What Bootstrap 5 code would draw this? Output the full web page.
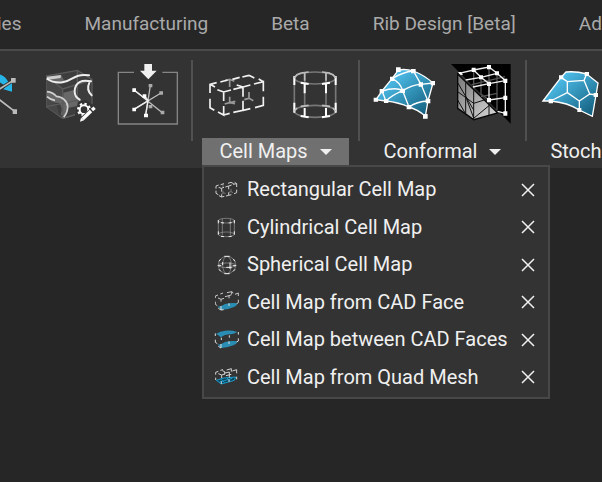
<!DOCTYPE html>
<html lang="en" data-bs-theme="dark">
<head>
<meta charset="utf-8">
<meta name="viewport" content="width=device-width, initial-scale=1">
<title>Cell Maps</title>
<link href="https://cdn.jsdelivr.net/npm/bootstrap@5.3.0/dist/css/bootstrap.min.css" rel="stylesheet">
<style>
  body { background: #262626; color: #f0f0f0; font-family: Roboto, sans-serif; font-size: 20px; line-height: 27px; min-height: 100vh; overflow: hidden; }
  .tabs { gap: 63px; height: 49px; margin-left: -3px; padding-bottom: 2px; font-size: 19px; white-space: nowrap; overflow: hidden; }
  .tabs .nav-link { color: #aaa; padding: 0; }
  .ribbon { background: #333; border-top: 2px solid #4a4a4a; padding-bottom: 3px; }
  .tool-group { width: 165px; padding-top: 13px; }
  .tool-group .tools { gap: 18px; margin-bottom: 14px; }
  .edit-group { width: 191px; padding-right: 13px; overflow: hidden; }
  .more-groups { min-width: 0; }
  .tool { width: 60px; height: 60px; }
  .tool svg { width: 60px; height: 60px; overflow: visible; display: block; }
  .rule { width: 2px; height: 81px; margin-top: 9px; background: #505050; }
  .group-btn { color: #f0f0f0; font-size: 20px; line-height: 27px; padding: 0 17px; gap: 12px; white-space: nowrap; }
  .group-btn.active { background: #707070 !important; color: #f0f0f0 !important; }
  .group-btn svg { width: 12px; height: 6px; }
  .map-menu.dropdown-menu { background: #333; border: 2px solid #484848; top: 100%; left: 9px; width: 348px; height: 234px; padding: 4px 0 1px; }
  .map-menu li { padding: 0 12px 0 11px; }
  .map-menu .pick { color: #f0f0f0; gap: 8px; font-size: 20px; line-height: 27px; white-space: nowrap; }
  .map-menu .pick svg { width: 24px; height: 24px; overflow: visible; }
  .close-x { width: 16px; height: 16px; }
  .close-x svg { width: 16px; height: 16px; display: block; }
</style>
<script src="https://cdn.jsdelivr.net/npm/bootstrap@5.3.0/dist/js/bootstrap.bundle.min.js"></script>
</head>
<body>
<svg class="position-absolute" width="0" height="0" aria-hidden="true">
  <defs>
    <linearGradient id="blue" x1="0" y1="0" x2="1" y2="1"><stop offset=".2" stop-color="#4fc0ec"/><stop offset="1" stop-color="#0d5573"/></linearGradient>
    <linearGradient id="silver" x1="0" y1="0" x2="1" y2="1"><stop offset="0" stop-color="#777"/><stop offset="1" stop-color="#ddd"/></linearGradient>
    <symbol id="box" viewBox="51 42 180 180">
      <g fill="none" stroke-width="5">
        <path stroke="#999" d="M119 88v23M119 140v18l-15 4M119 158l16 3M119 158l17-4M177 126v19l-14 4M177 145l13 7M106 92l13-4 14 6"/>
        <path stroke="#f2f2f2" d="M60 129v-26l20-5M60 103l15 8M60 146v27l13 8M82 119l19 7 22-6M101 126v27M101 168v27l-17-9M101 195l18-5M130 118l29-7 22-6M159 111v29M159 152v29l-29 6M159 181l22-5M140 105l19 6M192 102l28-7v29M220 95l-14-8M220 140v26l-25 7M177 76l16 8M157 81l20-5M127 88l22-6M91 96l22-6"/>
      </g>
    </symbol>
    <symbol id="cyl" viewBox="285 42 180 180">
      <g fill="none">
        <g stroke="#777" stroke-width="5"><ellipse cx="375" cy="84" rx="62" ry="18"/><ellipse cx="375" cy="184" rx="62" ry="18"/><path d="M313 84v100M437 84v100M344 70v97M408 70v97"/></g>
        <g stroke="#fff" stroke-width="6"><path d="M313 78v27M313 158v30M437 78v27M437 158v30M344 102v28M344 174v28M408 102v28M408 174v28M332 98l24 4M396 102l24-4M332 198l24 4M396 202l24-4"/></g>
        <path stroke="#bbb" stroke-width="5" d="M344 68v24M408 68v24M313 84l8-10 12-5M437 84l-8-10-12-5M313 184l8-10M437 184l-8-10M332 69l24-3M396 66l24 3M332 169l24-3M396 166l24 3"/>
      </g>
    </symbol>
    <symbol id="box-small" viewBox="45 54 72 72">
      <path fill="none" stroke="#777" stroke-width="3" d="M69 73v8M69 92v7l-5 3M69 99l8 1M93 87v8l-7 2M93 95l6 3"/>
      <path fill="none" stroke="#cfcfcf" stroke-width="3" d="M48 86v-8l8-3M48 92v8l7 4M56 82l8 3 8-3M65 85v10M65 103v8l-8-4M65 111l8-2M76 81l10-3 9-3M86 78v10M86 97v9l-8 2M86 106l8-2M99 73l11-2v10M110 71l-6-4M110 89v9l-8 3M84 70l9-3 8 4M62 74l10-3"/>
    </symbol>
    <symbol id="cyl-small" viewBox="45 162 72 72">
      <g fill="none" stroke="#999" stroke-width="2"><ellipse cx="79" cy="179" rx="24" ry="7"/><ellipse cx="79" cy="220" rx="24" ry="7"/><path d="M55 179v41M103 179v41M67 173v50M91 173v50"/></g>
      <path fill="none" stroke="#f0f0f0" stroke-width="3" d="M55 177v10M103 177v10M55 211v10M103 211v10M63 185l9 1M86 186l9-1M63 226l9 1M86 227l9-1"/>
    </symbol>
    <symbol id="cross" viewBox="0 0 16 16"><path d="M2 2 14 14M14 2 2 14" fill="none" stroke="#f0f0f0" stroke-width="1.5"/></symbol>
    <symbol id="caret" viewBox="0 0 12 6"><path d="M0 0h12L6 6z" fill="#f0f0f0"/></symbol>
    <symbol id="crown" viewBox="45 30 72 72">
      <path fill="none" stroke="#c9c9c9" stroke-width="3" d="M46 54v-6l8-3M46 65v8l6 4M54 54l9 4 9-3M63 58v7M61 42l8-3M75 50l12-3 8-3M87 47v8M81 38l14-3v7M95 35l5 4M105 43l10-4v9M115 59v9l-5 3"/>
    </symbol>
  </defs>
</svg>

<nav class="nav tabs flex-nowrap align-items-center" aria-label="Ribbon tabs">
  <a class="nav-link" href="#">ies</a>
  <a class="nav-link" href="#">Manufacturing</a>
  <a class="nav-link" href="#">Beta</a>
  <a class="nav-link" href="#">Rib Design [Beta]</a>
  <a class="nav-link" href="#">Ad</a>
</nav>

<main class="ribbon d-flex">
  <section class="tool-group edit-group flex-shrink-0 d-flex flex-column align-items-end">
    <div class="tools d-flex">
      <button class="tool btn p-0 border-0 flex-shrink-0" aria-label="Rotate lattice">
        <svg viewBox="-114 192 180 180"><path fill="#27b5e8" d="M-20 222Q12 218 27 250l9-3v28l-26-7 6-7Q2 240-20 248z"/><path d="M-20 279 40 241M-20 285 45 335" stroke="#333" stroke-width="10"/><path d="M-20 279 40 241M-20 285 45 335" stroke="#bbb" stroke-width="5"/><path fill="#bbb" d="M33 234h14v14H33zM38 328h13v14H38z"/></svg>
      </button>
      <button class="tool btn p-0 border-0 flex-shrink-0" aria-label="Edit implicit body">
        <svg viewBox="120 192 180 180">
          <path fill="#3d3d3d" stroke="#595959" stroke-width="4" d="m140 228 92-17 44 27v92l-88 25-48-34z"/>
          <path fill="#666" d="m140 231 44-6q5 13 12 20l-20 3q-15-2-36-12zM140 276q22 0 30 13 20-6 33 10 8 28-9 50l-12-5q8-25-6-35-22 0-36-18z"/>
          <path fill="#686868" d="m190 278 32-8q2 22 19 30l-8 18-31 6q4-20-12-30z"/>
          <path fill="#484848" d="m140 236 48 31v28l-48-20zM140 292l30 24 8 30-38-26z"/>
          <path fill="none" stroke="#5b5b5b" stroke-width="4" d="m140 228 48 39 88-27M188 267v88M232 211v90l44 29M140 320l92-19M188 355l88-25"/>
          <path fill="#ccc" d="m141 230 42-5-1 9-41 6z"/>
          <g fill="none" stroke="#eee" stroke-width="6" stroke-linecap="round"><path d="M142 237q18 13 46 10c28-3 34-28 79-21M273 244c-27-5-48 1-49 30q0 17 15 25M268 248q-10 22 7 38"/></g>
          <path fill="none" stroke="#d0d0d0" stroke-width="5" d="M141 275q18 2 28 14c18 0 34 16 34 31q0 17-12 32M141 290q9 9 24 11"/>
          <path fill="#333" d="m234 305 24-5 18 13 17 2v28l-46 27-23-20z"/>
          <circle cx="252" cy="329" r="13" fill="none" stroke="#fff" stroke-width="6"/><circle cx="252" cy="329" r="18" fill="none" stroke="#fff" stroke-width="6" stroke-dasharray="7 7"/>
          <path stroke="#333" stroke-width="18" d="m244 363 40-38"/><path stroke="#fff" stroke-width="10" d="m248 357 25-24M276 330l8-7"/><path fill="#fff" d="m240 365 3-12 9 8z"/>
        </svg>
      </button>
      <button class="tool btn p-0 border-0 flex-shrink-0" aria-label="Import lattice">
        <svg viewBox="354 192 180 180"><path fill="none" stroke="#858585" stroke-width="4" d="M402 217h-47v155h177V217h-45"/><path fill="#f0f0f0" d="M433 192h23v20h14l-25 26-25-26h13z"/><g stroke-width="4" stroke="#bbb" fill="none"><path d="m402 270 85 68M402 328l81-49M437 346l14-89"/><path stroke="#eee" d="m402 328 43-26-12-14M402 270l42 32-7 42"/></g><path fill="#aaa" d="M446 252h11v10h-11zM478 274h11v10h-11zM482 332h11v11h-11zM446 315h11v10h-11z"/><path fill="#fff" d="M397 265h11v11h-11zM397 323h11v11h-11zM428 283h11v11h-11zM432 341h12v11h-12z"/></svg>
      </button>
    </div>
  </section>

  <div class="rule flex-shrink-0"></div>

  <section class="tool-group position-relative flex-shrink-0 d-flex flex-column align-items-center">
    <div class="tools d-flex">
      <button class="tool btn p-0 border-0" aria-label="Rectangular Cell Map"><svg><use href="#box"/></svg></button>
      <button class="tool btn p-0 border-0" aria-label="Cylindrical Cell Map"><svg><use href="#cyl"/></svg></button>
    </div>
    <button class="group-btn active btn border-0 rounded-0 d-flex align-items-center" aria-expanded="true" aria-controls="maps">Cell Maps <svg><use href="#caret"/></svg></button>
    <ul id="maps" class="map-menu dropdown-menu show rounded-0 m-0 d-flex flex-column">
      <li class="d-flex flex-fill align-items-center"><button class="pick btn p-0 border-0 d-flex align-items-center flex-fill text-start"><svg><use href="#box-small"/></svg><span>Rectangular Cell Map</span></button><button class="close-x btn p-0 border-0" aria-label="Remove Rectangular Cell Map"><svg><use href="#cross"/></svg></button></li>
      <li class="d-flex flex-fill align-items-center"><button class="pick btn p-0 border-0 d-flex align-items-center flex-fill text-start"><svg><use href="#cyl-small"/></svg><span>Cylindrical Cell Map</span></button><button class="close-x btn p-0 border-0" aria-label="Remove Cylindrical Cell Map"><svg><use href="#cross"/></svg></button></li>
      <li class="d-flex flex-fill align-items-center"><button class="pick btn p-0 border-0 d-flex align-items-center flex-fill text-start"><svg viewBox="42 277 72 72"><g fill="none" stroke="#999" stroke-width="2"><circle cx="78" cy="313" r="26"/><ellipse cx="78" cy="313" rx="13" ry="26"/><ellipse cx="78" cy="314" rx="26" ry="7"/></g><path fill="none" stroke="#f0f0f0" stroke-width="3" d="M70 287h16M70 339h16M50 315h11M95 315h11M87 305v20M76 320h16M65 304v9M54 302l5-7M102 302l-5-7M54 326l5 6M102 326l-5 6"/></svg><span>Spherical Cell Map</span></button><button class="close-x btn p-0 border-0" aria-label="Remove Spherical Cell Map"><svg><use href="#cross"/></svg></button></li>
      <li class="d-flex flex-fill align-items-center"><button class="pick btn p-0 border-0 d-flex align-items-center flex-fill text-start"><svg viewBox="45 30 72 72"><path fill="#2a8db3" d="M53 80q14-2 22-8 20-5 39-2-4 8-14 12-14 7-36 8-5-5-11-10z"/><use href="#crown" x="45" y="30" width="72" height="72"/><path fill="none" stroke="#ddd" stroke-width="3" d="M63 78v12l-8-5M87 70v8M63 90l8-1"/></svg><span>Cell Map from CAD Face</span></button><button class="close-x btn p-0 border-0" aria-label="Remove Cell Map from CAD Face"><svg><use href="#cross"/></svg></button></li>
      <li class="d-flex flex-fill align-items-center"><button class="pick btn p-0 border-0 d-flex align-items-center flex-fill text-start"><svg viewBox="45 144 72 72"><path fill="#2a8db3" d="M48 162q12-9 28-10 22-1 36 4-8 5-19 7-16-2-31 9-6-7-14-10zM53 194q14-2 22-8 20-5 39-2-4 8-14 12-14 7-36 8-5-5-11-10z"/><path fill="none" stroke="#ddd" stroke-width="3" d="M46 168v-8M46 179v8l6 4M64 173v7M88 166v7M63 192v12l-8-5M87 184v8M115 156v8M115 175v8l-5 3"/></svg><span>Cell Map between CAD Faces</span></button><button class="close-x btn p-0 border-0" aria-label="Remove Cell Map between CAD Faces"><svg><use href="#cross"/></svg></button></li>
      <li class="d-flex flex-fill align-items-center"><button class="pick btn p-0 border-0 d-flex align-items-center flex-fill text-start"><svg viewBox="45 252 72 72"><path fill="#0a4158" stroke="#1d9bcb" stroke-width="3" d="m49 298 23-7 35-3-4 10-39 11zM59 303l38-11M62 294l12 11M80 290l10 10"/><path fill="none" stroke="#d4d4d4" stroke-width="3" d="M47 281v-7l8-3M47 290v7M55 278l10 4 9-3M65 282v9M61 268l8-2M75 276l13-3M88 273v17M80 267l14-4v9M67 269l7 3v9M97 270l13-4v11M110 287v8M64 301v8M87 295v8M78 284l16-4"/></svg><span>Cell Map from Quad Mesh</span></button><button class="close-x btn p-0 border-0" aria-label="Remove Cell Map from Quad Mesh"><svg><use href="#cross"/></svg></button></li>
    </ul>
  </section>

  <div class="rule flex-shrink-0"></div>

  <section class="tool-group flex-shrink-0 d-flex flex-column align-items-center">
    <div class="tools d-flex">
      <button class="tool btn p-0 border-0" aria-label="Conformal surface lattice">
        <svg viewBox="54 42 180 180"><path fill="url(#blue)" stroke="#fff" stroke-width="4" d="M60 149 78 123 108 86 127 60q22-4 45 3 32 12 59 36l-15 54-8 45q-25-20-49-27-30-14-69-18z"/><path fill="none" stroke="#fff" stroke-width="4" d="M78 123 90 153Q107 136 140 122 168 104 195 103L231 99M108 86Q132 96 140 122L159 171Q183 154 216 153M108 86Q140 66 172 63L195 103 216 153M78 123Q120 110 140 122"/><path fill="#fff" d="M53 143h13v12H53zM71 117h13v13H71zM84 147h13v12H84zM102 80h13v13h-13zM120 52h14v14h-14zM165 57h14v13h-14zM133 116h14v13h-14zM188 97h13v13h-13zM224 93h13v13h-13zM209 147h14v13h-14zM152 165h14v13h-14zM201 192h14v14h-14z"/></svg>
      </button>
      <button class="tool btn p-0 border-0" aria-label="Conformal volume lattice">
        <svg viewBox="291 42 180 180"><path d="M288 42h179v179z"/><path fill="url(#silver)" stroke="#080808" stroke-width="4" d="M308 72v103l48 34 72-20z"/><path fill="none" stroke="#111" stroke-width="3" d="M308 125l48 35 35-11M332 97v95M356 121v88M402 165v30M308 150l24 42M308 98l48 82M332 139l24 65M356 205l46-38"/><g fill="none" stroke="#555" stroke-width="4"><path d="M356 60v55M426 70v110M378 82v52M402 52v50M350 104l100-24M402 150l-24-18M426 130l-48 10"/></g><path fill="none" stroke="#eee" stroke-width="4" d="M312 70 356 60 402 51 426 70 451 92V190L428 184M332 90l46-8 48-12M354 111l48-10 49-9M356 60l22 22 24 19v49M402 150l49-7"/><path fill="#fff" d="m309 66 9 0 6 8-7 1zM350 53h12v13h-12zM396 45h12v13h-12zM420 64h12v12h-12zM372 76h12v12h-12zM396 95h12v13h-12zM445 86h12v13h-12zM396 144h12v13h-12zM445 137h12v13h-12zM445 184h12v13h-12z"/></svg>
      </button>
    </div>
    <button class="group-btn btn border-0 rounded-0 d-flex align-items-center">Conformal <svg><use href="#caret"/></svg></button>
  </section>

  <div class="rule flex-shrink-0"></div>

  <div class="more-groups flex-fill overflow-hidden">
    <section class="tool-group d-flex flex-column align-items-center">
      <div class="tools d-flex">
        <button class="tool btn p-0 border-0" aria-label="Stochastic surface lattice">
          <svg viewBox="93 192 180 180"><path fill="url(#blue)" stroke="#fff" stroke-width="4" d="M99 303 153 232 168 216q30-3 62 6l34 27-6 36-11 64-39-19q-35-22-86-27z"/><path fill="none" stroke="#fff" stroke-width="4" d="m153 232 19 13 50-4 8-19M172 245v33l-50 25M172 278l36 25v27M208 303l31-21-17-41M239 282l19 3"/><path fill="#fff" d="M147 226h13v12h-13zM224 216h13v12h-13zM251 279h13v12h-13zM202 324h12v12h-12zM116 297h13v13h-13z"/></svg>
        </button>
        <span class="tool"></span>
      </div>
      <button class="group-btn btn border-0 rounded-0 d-flex align-items-center">Stochastic <svg><use href="#caret"/></svg></button>
    </section>
  </div>
</main>
</body>
</html>
